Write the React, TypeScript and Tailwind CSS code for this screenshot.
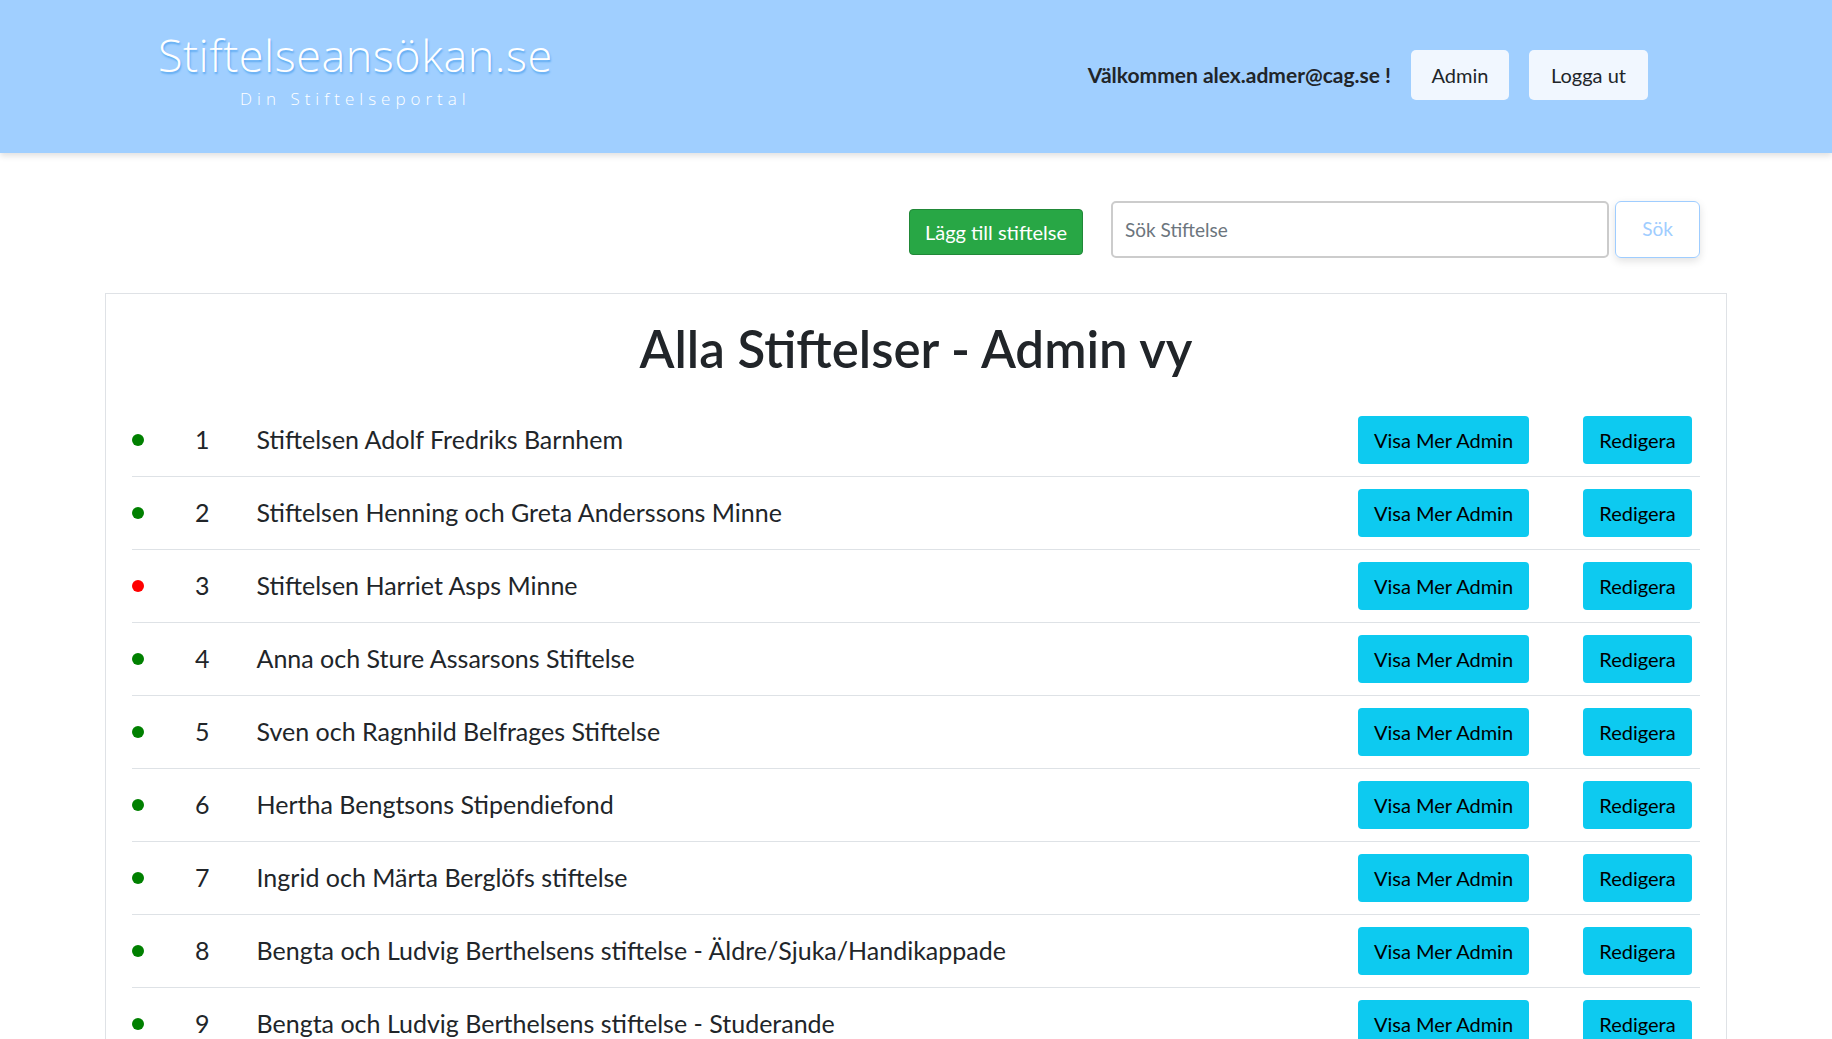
const stiftelser = [
  { id: 1, name: "Stiftelsen Adolf Fredriks Barnhem", active: true },
  { id: 2, name: "Stiftelsen Henning och Greta Anderssons Minne", active: true },
  { id: 3, name: "Stiftelsen Harriet Asps Minne", active: false },
  { id: 4, name: "Anna och Sture Assarsons Stiftelse", active: true },
  { id: 5, name: "Sven och Ragnhild Belfrages Stiftelse", active: true },
  { id: 6, name: "Hertha Bengtsons Stipendiefond", active: true },
  { id: 7, name: "Ingrid och Märta Berglöfs stiftelse", active: true },
  { id: 8, name: "Bengta och Ludvig Berthelsens stiftelse - Äldre/Sjuka/Handikappade", active: true },
  { id: 9, name: "Bengta och Ludvig Berthelsens stiftelse - Studerande", active: true },
  { id: 10, name: "Stiftelsen Bergstrandska fonden", active: true },
];

export default function App() {
  return (
    <div className="h-[1039px] overflow-hidden bg-white font-['Lato','Liberation_Sans',sans-serif] text-[#212529]">
      {/* header */}
      <header className="h-[153px] bg-[#a0cfff] shadow-[0_3px_6px_rgba(0,0,0,0.12)] flex items-center justify-between pl-[158px] pr-[184px]">
        <div className="flex flex-col items-center text-white font-['Open_Sans',sans-serif] -mt-[14px]">
          <div className="text-[45px] font-light leading-none tracking-[0.5px] [text-shadow:1px_2px_2px_#5aa8f0]">
            Stiftelseansökan.se
          </div>
          <div className="mt-[13px] text-[17px] font-light tracking-[5px] leading-none">Din Stiftelseportal</div>
        </div>
        <div className="flex items-center -mt-[3px]">
          <span className="text-[21px] font-bold mr-[20px]">Välkommen alex.admer@cag.se !</span>
          <button className="h-[50px] w-[98px] rounded-[5px] bg-[#f1f7ff] text-[20px]">Admin</button>
          <button className="h-[50px] w-[119px] ml-[20px] rounded-[5px] bg-[#f1f7ff] text-[20px]">Logga ut</button>
        </div>
      </header>

      {/* search */}
      <div className="flex items-center justify-end pr-[132px] mt-[48px]">
        <button className="mt-[4px] h-[46px] w-[174px] rounded-[4px] bg-[#28a745] border border-[#218838] text-white text-[20px]">
          Lägg till stiftelse
        </button>
        <input
          placeholder="Sök Stiftelse"
          className="ml-[28px] h-[57px] w-[498px] rounded-[5px] border-2 border-[#cccccc] px-[12px] text-[19px] placeholder:text-[#6c757d] outline-none"
        />
        <button className="ml-[6px] h-[57px] w-[85px] rounded-[6px] border border-[#9fcdff] text-[#9fcdff] text-[19px] shadow-[0_3px_8px_rgba(0,0,0,0.12)]">
          Sök
        </button>
      </div>

      {/* list */}
      <div className="mx-[105px] mt-[35px] border border-[#dfe2e6] px-[26px] pt-[24px]">
        <h1 className="text-center text-[51px] font-semibold leading-[1.2]">Alla Stiftelser - Admin vy</h1>
        <ul className="mt-[25px]">
          {stiftelser.map((s) => (
            <li key={s.id} className="flex items-center h-[73px] border-b border-[#dee2e6]">
              <span className={"w-3 h-3 rounded-full " + (s.active ? "bg-[#008000]" : "bg-[#ff0000]")} />
              <span className="ml-[51px] text-[25px]">{s.id}</span>
              <span className="ml-[47px] text-[25px] flex-1">{s.name}</span>
              <button className="h-[48px] w-[171px] rounded-[4px] bg-[#0dcaf0] text-[20px] text-black">Visa Mer Admin</button>
              <button className="ml-[54px] mr-[8px] h-[48px] w-[109px] rounded-[4px] bg-[#0dcaf0] text-[20px] text-black">
                Redigera
              </button>
            </li>
          ))}
        </ul>
      </div>
    </div>
  );
}
